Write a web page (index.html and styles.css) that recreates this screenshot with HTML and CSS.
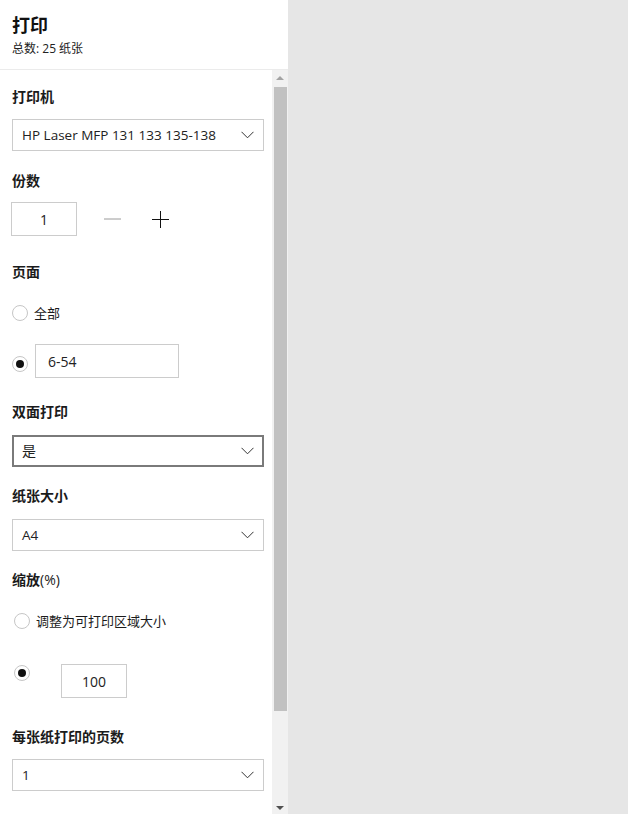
FILE: index.html
```html
<!DOCTYPE html>
<html lang="zh-CN">
<head>
<meta charset="utf-8">
<title>打印</title>
<link rel="stylesheet" href="styles.css">
</head>
<body>
<div class="app">
  <aside class="panel">
    <header class="head">
      <h1 class="title">打印</h1>
      <p class="subtitle">总数: 25 纸张</p>
    </header>
    <div class="body">
      <div class="content">
        <div class="label l-printer">打印机</div>
        <div class="select s-printer"><span class="sel-text latin">HP Laser MFP 131 133 135-138</span><svg class="chev" width="13" height="8" viewBox="0 0 13 8"><path d="M0.5 0.8 L6.5 6.8 L12.5 0.8" fill="none" stroke="#333" stroke-width="1"/></svg></div>

        <div class="label l-copies">份数</div>
        <div class="copies">
          <div class="num">1</div>
          <svg class="minus" width="17" height="2" viewBox="0 0 17 2"><path d="M0 1 H17" stroke="#9a9a9a" stroke-width="1"/></svg>
          <svg class="plus" width="17" height="17" viewBox="0 0 17 17"><path d="M0 8.5 H17 M8.5 0 V17" stroke="#111" stroke-width="1"/></svg>
        </div>

        <div class="label l-pages">页面</div>
        <div class="radio-row r-all"><span class="radio"></span><span class="radio-text">全部</span></div>
        <div class="radio-row r-range"><span class="radio checked"></span><div class="text-input">6-54</div></div>

        <div class="label l-duplex">双面打印</div>
        <div class="select focused s-duplex"><span class="sel-text">是</span><svg class="chev" width="13" height="8" viewBox="0 0 13 8"><path d="M0.5 0.8 L6.5 6.8 L12.5 0.8" fill="none" stroke="#333" stroke-width="1"/></svg></div>

        <div class="label l-paper">纸张大小</div>
        <div class="select s-paper"><span class="sel-text latin">A4</span><svg class="chev" width="13" height="8" viewBox="0 0 13 8"><path d="M0.5 0.8 L6.5 6.8 L12.5 0.8" fill="none" stroke="#333" stroke-width="1"/></svg></div>

        <div class="label l-scale">缩放<span class="light">(%)</span></div>
        <div class="radio-row r-fit"><span class="radio"></span><span class="radio-text">调整为可打印区域大小</span></div>
        <div class="radio-row r-custom"><span class="radio checked"></span><div class="num num-scale">100</div></div>

        <div class="label l-persheet">每张纸打印的页数</div>
        <div class="select s-persheet"><span class="sel-text latin">1</span><svg class="chev" width="13" height="8" viewBox="0 0 13 8"><path d="M0.5 0.8 L6.5 6.8 L12.5 0.8" fill="none" stroke="#333" stroke-width="1"/></svg></div>
      </div>
      <div class="scrollbar">
        <span class="arrow up"></span>
        <span class="thumb"></span>
        <span class="track-rest"></span>
        <span class="arrow down"></span>
      </div>
    </div>
  </aside>
  <main class="preview"></main>
</div>
</body>
</html>
```

FILE: styles.css
```css
* { box-sizing: border-box; }
html, body { margin: 0; padding: 0; }
body {
  font-family: "Open Sans", "Noto Sans CJK SC", sans-serif;
  color: #1b1b1b;
  background: #e6e6e6;
  width: 628px;
  height: 814px;
  overflow: hidden;
}
.app { display: flex; width: 628px; height: 814px; }
.panel {
  width: 288px;
  height: 814px;
  background: #fff;
  display: flex;
  flex-direction: column;
}
.preview { flex: 1; background: #e6e6e6; }

.head {
  height: 70px;
  border-bottom: 1px solid #ebebeb;
  padding: 14px 12px 0;
}
.title {
  margin: 0;
  font-size: 18px;
  line-height: 22px;
  font-weight: 700;
  color: #111;
}
.subtitle {
  margin: 5px 0 0;
  font-size: 12px;
  line-height: 16px;
  color: #222;
}

.body { flex: 1; display: flex; min-height: 0; }
.content {
  width: 272px;
  padding: 18px 0 0 12px;
  overflow: hidden;
}

.label {
  font-size: 14px;
  line-height: 18px;
  font-weight: 700;
  color: #1b1b1b;
}
.label .light { font-weight: 400; }

.select {
  width: 252px;
  height: 32px;
  border: 1px solid #cccccc;
  display: flex;
  align-items: center;
  justify-content: space-between;
  padding: 0 9px 0 9px;
  font-size: 14px;
  color: #222;
}
.select.focused { border: 2px solid #7a7a7a; padding: 0 8px 0 8px; }
.sel-text { line-height: 20px; }
.sel-text.latin { font-size: 13.5px; }
.chev { display: block; }

.s-printer { margin-top: 13px; }
.l-copies { margin-top: 21px; }
.copies { margin-top: 12px; display: flex; align-items: center; height: 34px; }
.num {
  width: 66px;
  height: 34px;
  border: 1px solid #cccccc;
  display: flex;
  align-items: center;
  justify-content: center;
  font-size: 14px;
  color: #222;
}
.copies .num { margin-left: -1px; }
.minus { margin-left: 27px; }
.plus { margin-left: 31px; }

.l-pages { margin-top: 27px; }
.radio-row { display: flex; align-items: center; }
.radio {
  width: 16px;
  height: 16px;
  border: 1px solid #c6c6c6;
  border-radius: 50%;
  flex: none;
  display: flex;
  align-items: center;
  justify-content: center;
}
.radio.checked::after {
  content: "";
  width: 8px;
  height: 8px;
  border-radius: 50%;
  background: #111;
}
.radio-text { margin-left: 6px; font-size: 13px; line-height: 20px; color: #1b1b1b; }
.r-all { margin-top: 22px; height: 20px; }
.r-range { margin-top: 21px; align-items: flex-start; }
.r-range .radio { margin-top: 12px; }
.text-input {
  margin-left: 7px;
  width: 144px;
  height: 34px;
  border: 1px solid #cccccc;
  display: flex;
  align-items: center;
  padding-left: 12px;
  font-size: 14px;
  color: #222;
}

.l-duplex { margin-top: 25px; }
.s-duplex { margin-top: 14px; }
.l-paper { margin-top: 20px; }
.s-paper { margin-top: 14px; }
.l-scale { margin-top: 20px; }
.r-fit { margin-top: 22px; height: 20px; padding-left: 2px; }
.r-custom { margin-top: 33px; align-items: flex-start; padding-left: 2px; }
.r-custom .radio { margin-top: 1px; }
.num-scale { margin-left: 31px; }
.l-persheet { margin-top: 30px; }
.s-persheet { margin-top: 13px; }

.scrollbar {
  width: 16px;
  background: #f1f1f1;
  display: flex;
  flex-direction: column;
  align-items: center;
}
.arrow { display: block; width: 0; height: 0; border-left: 4px solid transparent; border-right: 4px solid transparent; }
.arrow.up { margin-top: 6px; border-bottom: 4px solid #a3a3a3; }
.thumb { display: block; width: 13px; height: 624px; margin-top: 7px; background: #c1c1c1; }
.track-rest { flex: 1; }
.arrow.down { margin-bottom: 4px; border-top: 4px solid #505050; }
```
